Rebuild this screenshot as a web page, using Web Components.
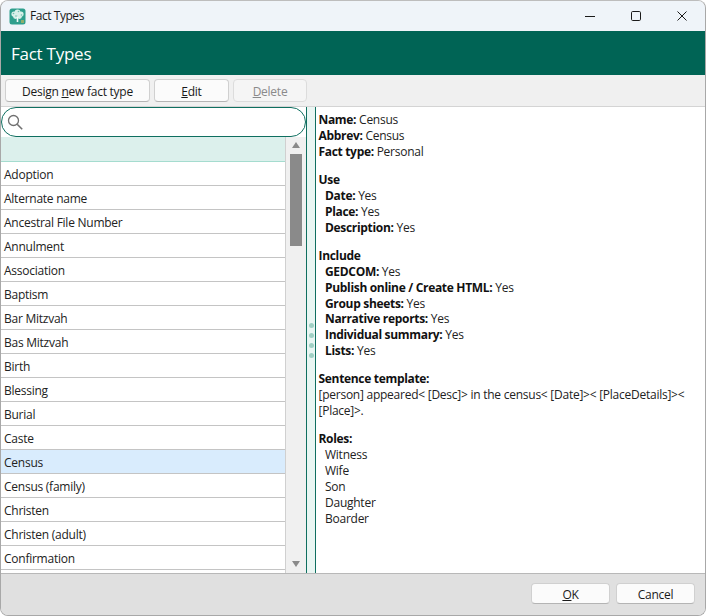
<!DOCTYPE html>
<html>
<head>
<meta charset="utf-8">
<title>Fact Types</title>
<style>
    html, body { margin: 0; padding: 0; height: 100%; background: #fff; }
    body { font-family: "Open Sans", "Noto Sans", sans-serif; font-size: 12px; color: #1a1a1a; }
</style>
</head>
<body>
<ft-window>
    <ft-titlebar slot="title">Fact Types</ft-titlebar>
    <ft-banner slot="banner">Fact Types</ft-banner>
    <ft-toolbar slot="toolbar">
        <ft-button style="width:145px">Design <u>n</u>ew fact type</ft-button>
        <ft-button style="width:75px"><u>E</u>dit</ft-button>
        <ft-button style="width:74px" disabled><u>D</u>elete</ft-button>
    </ft-toolbar>
    <ft-master slot="master"></ft-master>
    <ft-splitter slot="splitter"></ft-splitter>
    <ft-details slot="details"></ft-details>
    <ft-footer slot="footer">
        <ft-button style="width:79px;height:21px"><u>O</u>K</ft-button>
        <ft-button style="width:79px;height:21px">Cancel</ft-button>
    </ft-footer>
</ft-window>

<script>
class FtWindow extends HTMLElement {
    constructor() {
        super();
        this.attachShadow({ mode: 'open' });
        this.shadowRoot.innerHTML = `
            <style>
                :host {
                    display: flex;
                    flex-direction: column;
                    width: 706px;
                    height: 616px;
                    box-sizing: border-box;
                    border: 1px solid #a8a8a8;
                    border-top-color: #bdbdbd;
                    border-radius: 8px;
                    overflow: hidden;
                    background: #f0f0f0;
                }
                .body { display: flex; height: 466px; }
            </style>
            <slot name="title"></slot>
            <slot name="banner"></slot>
            <slot name="toolbar"></slot>
            <div class="body">
                <slot name="master"></slot>
                <slot name="splitter"></slot>
                <slot name="details"></slot>
            </div>
            <slot name="footer"></slot>
        `;
    }
}

class FtTitlebar extends HTMLElement {
    constructor() {
        super();
        this.attachShadow({ mode: 'open' });
        this.shadowRoot.innerHTML = `
            <style>
                :host {
                    display: flex;
                    align-items: center;
                    height: 30px;
                    background: #eff4f9;
                    padding-left: 8px;
                    font-size: 12px;
                    color: #1a1a1a;
                }
                svg { display: block; flex: none; }
                .name { margin-left: 4px; flex: 1; position: relative; top: -1px; letter-spacing: -0.45px; }
                .ctl { width: 46px; height: 30px; display: flex; align-items: center; justify-content: center; }
            </style>
            <svg width="17" height="17" viewBox="0 0 17 17">
                <rect x="0.5" y="0.5" width="16" height="16" rx="2.5" fill="#2f9f8d"/>
                <g fill="#d9f0ea">
                    <circle cx="5" cy="6" r="2.6"/>
                    <circle cx="8.5" cy="4.5" r="3"/>
                    <circle cx="12" cy="6" r="2.6"/>
                    <circle cx="6.5" cy="8.5" r="2.4"/>
                    <circle cx="10.5" cy="8.5" r="2.4"/>
                </g>
                <g fill="#6fbfae">
                    <circle cx="4.5" cy="5.5" r="0.8"/>
                    <circle cx="9.5" cy="3.5" r="0.8"/>
                    <circle cx="12.5" cy="7" r="0.8"/>
                    <circle cx="7" cy="8" r="0.8"/>
                </g>
                <path d="M7.7 9h1.6v5H7.7z" fill="#f4fbf9"/>
                <rect x="12" y="12" width="3" height="3" fill="#8fae6a"/>
            </svg>
            <span class="name"><slot></slot></span>
            <div class="ctl">
                <svg width="12" height="12" viewBox="0 0 12 12"><path d="M1 6.5h10" stroke="#1a1a1a" fill="none"/></svg>
            </div>
            <div class="ctl">
                <svg width="12" height="12" viewBox="0 0 12 12"><rect x="1.5" y="1.5" width="9" height="9" rx="1.2" stroke="#1a1a1a" fill="none"/></svg>
            </div>
            <div class="ctl">
                <svg width="12" height="12" viewBox="0 0 12 12"><path d="M1.5 1.5l9 9M10.5 1.5l-9 9" stroke="#1a1a1a" fill="none"/></svg>
            </div>
        `;
    }
}

class FtBanner extends HTMLElement {
    constructor() {
        super();
        this.attachShadow({ mode: 'open' });
        this.shadowRoot.innerHTML = `
            <style>
                :host {
                    display: flex;
                    align-items: center;
                    height: 44px;
                    box-sizing: border-box;
                    padding: 1px 0 0 10px;
                    background: #006455;
                    color: #fff;
                    font-size: 17px;
                    letter-spacing: -0.25px;
                }
            </style>
            <slot></slot>
        `;
    }
}

class FtToolbar extends HTMLElement {
    constructor() {
        super();
        this.attachShadow({ mode: 'open' });
        this.shadowRoot.innerHTML = `
            <style>
                :host {
                    display: flex;
                    align-items: flex-start;
                    gap: 4px;
                    height: 32px;
                    box-sizing: border-box;
                    padding: 4px 0 0 4px;
                    background: #f0f0f0;
                    border-bottom: 1px solid #d4d4d4;
                }
            </style>
            <slot></slot>
        `;
    }
}

class FtButton extends HTMLElement {
    constructor() {
        super();
        this.attachShadow({ mode: 'open' });
        this.shadowRoot.innerHTML = `
            <style>
                :host {
                    display: flex;
                    align-items: center;
                    justify-content: center;
                    box-sizing: border-box;
                    height: 23px;
                    padding-top: 1px;
                    background: #fbfbfb;
                    border: 1px solid #d0d0d0;
                    border-bottom-color: #b4b4b4;
                    border-radius: 4px;
                    font-size: 12px;
                    letter-spacing: -0.25px;
                    color: #1a1a1a;
                }
                :host([disabled]) {
                    background: #f5f5f5;
                    border-color: #dcdcdc;
                    color: #8a8a8a;
                }
            </style>
            <span><slot></slot></span>
        `;
    }
}

class FtSearch extends HTMLElement {
    constructor() {
        super();
        this.attachShadow({ mode: 'open' });
        this.shadowRoot.innerHTML = `
            <style>
                :host {
                    display: flex;
                    align-items: center;
                    box-sizing: border-box;
                    height: 30px;
                    flex: none;
                    background: #fff;
                    border: 1px solid #0f6f60;
                    border-radius: 15px;
                    padding-left: 5px;
                }
                svg { display: block; }
            </style>
            <svg width="17" height="17" viewBox="0 0 17 17" fill="none" stroke="#707070">
                <circle cx="6.5" cy="6.5" r="5" stroke-width="1.3"/>
                <path d="M10.2 10.2l5 5" stroke-width="1.6"/>
            </svg>
        `;
    }
}

class FtRow extends HTMLElement {
    constructor() {
        super();
        this.attachShadow({ mode: 'open' });
        this.shadowRoot.innerHTML = `
            <style>
                :host {
                    display: flex;
                    align-items: center;
                    flex: none;
                    box-sizing: border-box;
                    height: 24px;
                    padding: 2px 0 0 3px;
                    background: #fff;
                    border-bottom: 1px solid #c4c4c4;
                    font-size: 12px;
                    letter-spacing: -0.25px;
                    color: #222;
                }
                :host([selected]) { background: #d9ecfd; }
                :host([filter]) { height: 25px; background: #dcf0ec; border-bottom-color: #a5dccf; }
            </style>
            <slot></slot>
        `;
    }
}

class FtScrollbar extends HTMLElement {
    constructor() {
        super();
        this.attachShadow({ mode: 'open' });
        this.shadowRoot.innerHTML = `
            <style>
                :host {
                    display: flex;
                    flex-direction: column;
                    align-items: center;
                    flex: none;
                    width: 21px;
                    background: #f0f0f0;
                    border-left: 1px solid #d0d0d0;
                    box-sizing: border-box;
                }
                svg { display: block; flex: none; }
                .track { flex: 1; width: 12px; }
                .thumb { width: 12px; height: 92px; background: #8a8a8a; }
            </style>
            <svg style="margin-top:4px;margin-bottom:5px" width="10" height="8" viewBox="0 0 10 8"><path d="M5 1l4 6H1z" fill="#8a8a8a"/></svg>
            <div class="track"><div class="thumb"></div></div>
            <svg style="margin-bottom:5px" width="10" height="8" viewBox="0 0 10 8"><path d="M1 1h8L5 7z" fill="#8a8a8a"/></svg>
        `;
    }
}

class FtMaster extends HTMLElement {
    constructor() {
        super();
        this.attachShadow({ mode: 'open' });
        const names = ['Adoption', 'Alternate name', 'Ancestral File Number', 'Annulment', 'Association',
            'Baptism', 'Bar Mitzvah', 'Bas Mitzvah', 'Birth', 'Blessing', 'Burial', 'Caste', 'Census',
            'Census (family)', 'Christen', 'Christen (adult)', 'Confirmation'];
        this.shadowRoot.innerHTML = `
            <style>
                :host {
                    display: flex;
                    flex-direction: column;
                    width: 305px;
                    flex: none;
                    background: #fff;
                    overflow: hidden;
                }
                .grid { display: flex; height: 436px; min-height: 0; }
                .rows { flex: 1; display: flex; flex-direction: column; overflow: hidden; min-width: 0; }
            </style>
            <ft-search></ft-search>
            <div class="grid">
                <div class="rows">
                    <ft-row filter></ft-row>
                    ${names.map(n => `<ft-row ${n === 'Census' ? 'selected' : ''}>${n}</ft-row>`).join('')}
                </div>
                <ft-scrollbar></ft-scrollbar>
            </div>
        `;
    }
}

class FtSplitter extends HTMLElement {
    constructor() {
        super();
        this.attachShadow({ mode: 'open' });
        this.shadowRoot.innerHTML = `
            <style>
                :host {
                    display: flex;
                    flex-direction: column;
                    align-items: center;
                    justify-content: center;
                    gap: 5px;
                    flex: none;
                    width: 10px;
                    box-sizing: border-box;
                    background: #e9f6f3;
                    border-left: 1px solid #0f6f60;
                    border-right: 1px solid #0f6f60;
                }
                i { width: 5px; height: 5px; border-radius: 50%; background: #9fd0c4; display: block; }
            </style>
            <i></i><i></i><i></i><i></i>
        `;
    }
}

class FtDetails extends HTMLElement {
    constructor() {
        super();
        this.attachShadow({ mode: 'open' });
        this.shadowRoot.innerHTML = `
            <style>
                :host {
                    display: block;
                    flex: 1;
                    min-width: 0;
                    box-sizing: border-box;
                    padding: 5px 3px 0 2.5px;
                    background: #fff;
                    font-size: 12px;
                    line-height: 15.95px;
                    letter-spacing: -0.25px;
                    color: #222;
                }
                section { margin-bottom: 12px; }
                div { padding-left: 6.5px; }
                b { font-weight: 700; color: #111; letter-spacing: -0.32px; }
            </style>
            <section><b>Name:</b> Census<br><b>Abbrev:</b> Census<br><b>Fact type:</b> Personal</section>
            <section><b>Use</b>
                <div><b>Date:</b> Yes</div>
                <div><b>Place:</b> Yes</div>
                <div><b>Description:</b> Yes</div>
            </section>
            <section><b>Include</b>
                <div><b>GEDCOM:</b> Yes</div>
                <div><b>Publish online / Create HTML:</b> Yes</div>
                <div><b>Group sheets:</b> Yes</div>
                <div><b>Narrative reports:</b> Yes</div>
                <div><b>Individual summary:</b> Yes</div>
                <div><b>Lists:</b> Yes</div>
            </section>
            <section><b>Sentence template:</b><br>[person] appeared&lt; [Desc]&gt; in the census&lt; [Date]&gt;&lt; [PlaceDetails]&gt;&lt; [Place]&gt;.</section>
            <section><b>Roles:</b>
                <div>Witness</div>
                <div>Wife</div>
                <div>Son</div>
                <div>Daughter</div>
                <div>Boarder</div>
            </section>
        `;
    }
}

class FtFooter extends HTMLElement {
    constructor() {
        super();
        this.attachShadow({ mode: 'open' });
        this.shadowRoot.innerHTML = `
            <style>
                :host {
                    display: flex;
                    justify-content: flex-end;
                    align-items: flex-start;
                    gap: 6px;
                    flex: 1;
                    box-sizing: border-box;
                    padding: 9px 10px 0 0;
                    background: #e0e0e0;
                    border-top: 1px solid #b8b8b8;
                }
            </style>
            <slot></slot>
        `;
    }
}

customElements.define('ft-window', FtWindow);
customElements.define('ft-titlebar', FtTitlebar);
customElements.define('ft-banner', FtBanner);
customElements.define('ft-toolbar', FtToolbar);
customElements.define('ft-button', FtButton);
customElements.define('ft-search', FtSearch);
customElements.define('ft-row', FtRow);
customElements.define('ft-scrollbar', FtScrollbar);
customElements.define('ft-master', FtMaster);
customElements.define('ft-splitter', FtSplitter);
customElements.define('ft-details', FtDetails);
customElements.define('ft-footer', FtFooter);
</script>
</body>
</html>
